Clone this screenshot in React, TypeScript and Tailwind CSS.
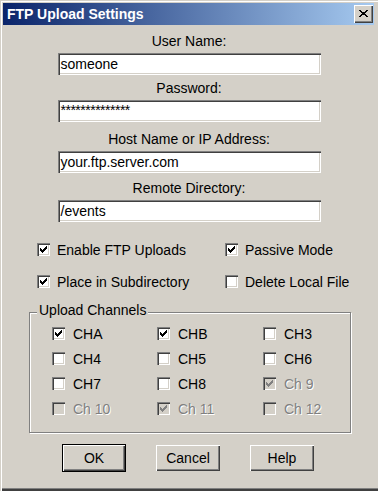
import React from "react";

const CHECK_RUNS: [number, number, number][] = [
  [3, 9, 9],
  [4, 8, 9],
  [5, 3, 3],
  [5, 7, 9],
  [6, 3, 4],
  [6, 6, 8],
  [7, 3, 7],
  [8, 4, 6],
  [9, 5, 5],
];

const checkPath = CHECK_RUNS.map(([y, x1, x2]) => `M${x1} ${y}h${x2 - x1 + 1}v1h-${x2 - x1 + 1}z`).join("");

const X_ROWS: [number, number, number][] = [
  [0, 0, 1],
  [0, 7, 8],
  [1, 1, 2],
  [1, 6, 7],
  [2, 2, 6],
  [3, 3, 5],
  [4, 2, 6],
  [5, 1, 2],
  [5, 6, 7],
  [6, 0, 1],
  [6, 7, 8],
];
const xPath = X_ROWS.map(([y, x1, x2]) => `M${x1} ${y}h${x2 - x1 + 1}v1h-${x2 - x1 + 1}z`).join("");

function Box({ checked, disabled }: { checked?: boolean; disabled?: boolean }) {
  return (
    <div
      className={
        "relative w-[13px] h-[13px] shrink-0 shadow-[inset_1px_1px_0_#808080,inset_2px_2px_0_#404040,inset_-1px_-1px_0_#ffffff,inset_-2px_-2px_0_#d4d0c8] " +
        (disabled ? "bg-[#d4d0c8]" : "bg-white")
      }
    >
      {checked && (
        <svg width="13" height="13" viewBox="0 0 13 13" className="absolute left-0 top-0" shapeRendering="crispEdges">
          <path d={checkPath} fill={disabled ? "#808080" : "#000000"} />
        </svg>
      )}
    </div>
  );
}

function Check({
  label,
  checked,
  disabled,
  className = "",
  gap = "gap-[7px]",
}: {
  label: string;
  checked?: boolean;
  disabled?: boolean;
  className?: string;
  gap?: string;
}) {
  return (
    <div className={"flex items-center h-[13px] " + gap + " " + className}>
      <Box checked={checked} disabled={disabled} />
      <span
        className={
          "text-[14px] leading-[16px] whitespace-nowrap " +
          (disabled ? "text-[#808080] [text-shadow:1px_1px_0_#ffffff]" : "text-black")
        }
      >
        {label}
      </span>
    </div>
  );
}

function Field({ value, password }: { value: string; password?: boolean }) {
  return (
    <div className="w-[263px] h-[22px] bg-white flex items-center pl-[3px] shadow-[inset_1px_1px_0_#808080,inset_2px_2px_0_#404040,inset_-1px_-1px_0_#ffffff,inset_-2px_-2px_0_#d4d0c8]">
      {password ? (
        <span className="self-start mt-[3px] text-[14px] leading-[14px] tracking-[-0.5px] text-black">{value}</span>
      ) : (
        <span className="text-[14px] leading-[16px] text-black">{value}</span>
      )}
    </div>
  );
}

function Label({ text, className = "" }: { text: string; className?: string }) {
  return <div className={"h-[16px] text-[14px] leading-[16px] text-black " + className}>{text}</div>;
}

function Button({ text, isDefault }: { text: string; isDefault?: boolean }) {
  if (isDefault) {
    return (
      <div className="w-[64px] h-[28px] border border-black flex items-center justify-center bg-[#d4d0c8] shadow-[inset_1px_1px_0_#ffffff,inset_-1px_-1px_0_#404040,inset_-2px_-2px_0_#808080]">
        <span className="text-[14px] leading-[16px] text-black">{text}</span>
      </div>
    );
  }
  return (
    <div className="w-[64px] h-[26px] flex items-center justify-center bg-[#d4d0c8] shadow-[inset_1px_1px_0_#ffffff,inset_-1px_-1px_0_#404040,inset_-2px_-2px_0_#808080]">
      <span className="text-[14px] leading-[16px] text-black">{text}</span>
    </div>
  );
}

export default function App() {
  const channels: { label: string; checked?: boolean; disabled?: boolean }[] = [
    { label: "CHA", checked: true },
    { label: "CHB", checked: true },
    { label: "CH3" },
    { label: "CH4" },
    { label: "CH5" },
    { label: "CH6" },
    { label: "CH7" },
    { label: "CH8" },
    { label: "Ch 9", checked: true, disabled: true },
    { label: "Ch 10", disabled: true },
    { label: "Ch 11", checked: true, disabled: true },
    { label: "Ch 12", disabled: true },
  ];
  return (
    <div className="w-[378px] h-[491px] bg-[#d4d0c8] overflow-hidden pt-[3px] px-[3px] font-['Liberation_Sans',Arial,sans-serif] shadow-[inset_1px_1px_0_#d4d0c8,inset_2px_2px_0_#ffffff,inset_0_-2px_0_#404040,inset_0_-3px_0_#808080]">
      <div className="w-[371px] h-[22px] flex items-center pl-[4px] bg-[linear-gradient(to_right,#0a246a,#a6caf0)]">
        <span className="text-white font-bold text-[14px] leading-[16px] whitespace-nowrap">FTP Upload Settings</span>
        <div className="ml-auto mr-[1px] w-[19px] h-[18px] bg-[#d4d0c8] flex items-center justify-center shadow-[inset_1px_1px_0_#ffffff,inset_-1px_-1px_0_#404040,inset_-2px_-2px_0_#808080]">
          <svg width="9" height="7" viewBox="0 0 9 7" shapeRendering="crispEdges" className="-mt-[1px]">
            <path d={xPath} fill="#000000" />
          </svg>
        </div>
      </div>

      <div className="flex flex-col items-center">
        <Label text="User Name:" className="mt-[8px]" />
        <div className="mt-[4px]">
          <Field value="someone" />
        </div>
        <Label text="Password:" className="mt-[5px]" />
        <div className="mt-[4px]">
          <Field value="**************" password />
        </div>
        <Label text="Host Name or IP Address:" className="mt-[9px]" />
        <div className="mt-[4px]">
          <Field value="your.ftp.server.com" />
        </div>
        <Label text="Remote Directory:" className="mt-[7px]" />
        <div className="mt-[4px]">
          <Field value="/events" />
        </div>
      </div>

      <div className="flex mt-[21px] pl-[34px]">
        <Check label="Enable FTP Uploads" checked className="w-[188px]" />
        <Check label="Passive Mode" checked />
      </div>
      <div className="flex mt-[19px] pl-[34px]">
        <Check label="Place in Subdirectory" checked className="w-[188px]" />
        <Check label="Delete Local File" />
      </div>

      <div className="relative mt-[24px] ml-[26px] w-[322px] h-[121px] border border-[#808080] shadow-[1px_1px_0_#ffffff,inset_1px_1px_0_#ffffff]">
        <div className="absolute left-[7px] top-[-11px] px-[2px] bg-[#d4d0c8] text-[14px] leading-[16px] text-black whitespace-nowrap">
          Upload Channels
        </div>
        <div className="grid grid-cols-[105px_106px_80px] gap-y-[12px] pt-[14px] pl-[22px]">
          {channels.map((c) => (
            <Check key={c.label} label={c.label} checked={c.checked} disabled={c.disabled} gap="gap-[8px]" />
          ))}
        </div>
      </div>

      <div className="flex items-center gap-[30px] mt-[11px] ml-[59px]">
        <Button text="OK" isDefault />
        <Button text="Cancel" />
        <Button text="Help" />
      </div>
    </div>
  );
}
